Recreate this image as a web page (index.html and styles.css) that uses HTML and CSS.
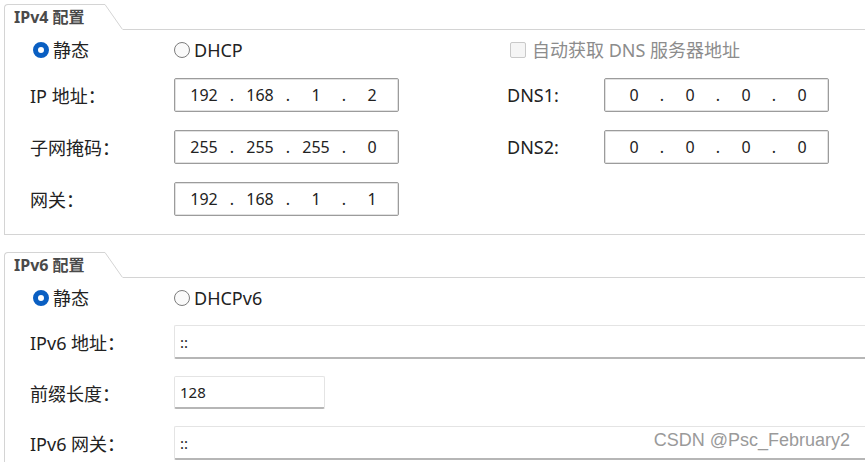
FILE: index.html
```html
<!DOCTYPE html>
<html lang="zh-CN">
<head>
  <meta charset="UTF-8">
  <meta name="viewport" content="width=device-width, initial-scale=1.0">
  <title>IP 配置</title>
  <link rel="stylesheet" href="styles.css">
</head>
<body>
  <div class="page">
    <!-- IPv4 -->
    <section class="group">
      <div class="group-head">
        <div class="tab">IPv4 配置</div>
        <svg class="tab-slant" width="18" height="26" viewBox="0 0 18 26"><path d="M0 0.5 L17.5 25.5" stroke="#d4d4d4" fill="none"/></svg>
        <div class="tab-rest"></div>
      </div>
      <div class="group-body v4">
        <label class="radio"><span class="dot on"></span>静态</label>
        <label class="radio"><span class="dot"></span>DHCP</label>
        <span></span>
        <label class="check"><span class="box"></span>自动获取 DNS 服务器地址</label>

        <span class="label">IP 地址：</span>
        <div class="ip"><span>192</span><i>.</i><span>168</span><i>.</i><span>1</span><i>.</i><span>2</span></div>
        <span></span>
        <span class="label">DNS1:</span>
        <div class="ip"><span>0</span><i>.</i><span>0</span><i>.</i><span>0</span><i>.</i><span>0</span></div>

        <span class="label">子网掩码：</span>
        <div class="ip"><span>255</span><i>.</i><span>255</span><i>.</i><span>255</span><i>.</i><span>0</span></div>
        <span></span>
        <span class="label">DNS2:</span>
        <div class="ip"><span>0</span><i>.</i><span>0</span><i>.</i><span>0</span><i>.</i><span>0</span></div>

        <span class="label">网关：</span>
        <div class="ip"><span>192</span><i>.</i><span>168</span><i>.</i><span>1</span><i>.</i><span>1</span></div>
      </div>
    </section>

    <!-- IPv6 -->
    <section class="group second">
      <div class="group-head">
        <div class="tab">IPv6 配置</div>
        <svg class="tab-slant" width="18" height="26" viewBox="0 0 18 26"><path d="M0 0.5 L17.5 25.5" stroke="#d4d4d4" fill="none"/></svg>
        <div class="tab-rest"></div>
      </div>
      <div class="group-body v6">
        <label class="radio"><span class="dot on"></span>静态</label>
        <label class="radio"><span class="dot"></span>DHCPv6</label>

        <span class="label">IPv6 地址：</span>
        <div class="field wide">::</div>

        <span class="label">前缀长度：</span>
        <div class="field short">128</div>

        <span class="label">IPv6 网关：</span>
        <div class="field wide">::</div>
      </div>
    </section>
  </div>

  <div class="watermark">CSDN @Psc_February2</div>
</body>
</html>
```

FILE: styles.css
```css
* {
  margin: 0;
  padding: 0;
  box-sizing: border-box;
}

body {
  font-family: 'Noto Sans', 'Noto Sans CJK SC', sans-serif;
  color: #222;
  background: #fff;
  height: 462px;
  position: relative;
  overflow: hidden;
}

.page {
  padding: 4px 0 0 4px;
}

/* group box with tab header */
.group-head {
  display: flex;
  height: 26px;
}

.tab {
  width: 101px;
  height: 26px;
  border-top: 1px solid #d4d4d4;
  border-left: 1px solid #d4d4d4;
  border-top-left-radius: 4px;
  padding-left: 9px;
  font-size: 16px;
  font-weight: bold;
  line-height: 24px;
  color: #4a4a4a;
  white-space: nowrap;
}

.tab-slant {
  display: block;
  flex: none;
}

.tab-rest {
  flex: 1;
  border-bottom: 1px solid #d4d4d4;
}

.group-body {
  border-left: 1px solid #d4d4d4;
  border-bottom: 1px solid #d4d4d4;
  display: grid;
  align-items: center;
  padding-left: 25px;
  padding-top: 10px;
}

.group-body.v4 {
  grid-template-columns: 144px 225px 108px 97px 225px;
  grid-template-rows: 20px 34px 34px 34px;
  row-gap: 18px;
  padding-bottom: 18px;
}

.group.second {
  margin-top: 17px;
}

.group-body.v6 {
  grid-template-columns: 144px 1fr;
  grid-template-rows: 20px 34px 33px 34px;
  row-gap: 17px;
  padding-bottom: 10px;
}

.label {
  font-size: 18px;
  color: #222;
  white-space: nowrap;
}

/* radios and checkbox */
.radio, .check {
  display: flex;
  align-items: center;
  gap: 4px;
  font-size: 18px;
  line-height: 20px;
  white-space: nowrap;
}

.radio:first-child {
  margin-left: 3px;
}

.dot {
  width: 16px;
  height: 16px;
  border-radius: 50%;
  border: 1px solid #7c7c7c;
  background: #fafafa;
  flex: none;
}

.dot.on {
  border: 5px solid #0a5fc2;
  background: #fff;
}

.check {
  grid-column: 4 / span 2;
  margin-left: 3px;
  color: #8c8c8c;
  gap: 6px;
}

.box {
  width: 16px;
  height: 16px;
  border: 1px solid #c9c9c9;
  border-radius: 2px;
  background: #f5f5f5;
  flex: none;
}

/* ip address control */
.ip {
  height: 34px;
  border: 1px solid #9c9c9c;
  border-radius: 2px;
  box-shadow: inset 0 0 0 1px #e2e2e2;
  display: flex;
  align-items: center;
  padding-left: 6px;
  font-size: 16px;
  color: #222;
}

.ip span {
  width: 46px;
  text-align: center;
}

.ip i {
  font-style: normal;
  width: 10px;
  text-align: center;
}

/* ipv6 text fields */
.field {
  height: 100%;
  border: 1px solid #e4e4e4;
  border-bottom: 2px solid #b6b6b6;
  border-radius: 2px;
  background: #fff;
  display: flex;
  align-items: center;
  padding-left: 5px;
  font-size: 15px;
  color: #222;
}

.field.short {
  width: 151px;
}

.field.wide {
  border-right: none;
  border-radius: 2px 0 0 2px;
}

.watermark {
  position: absolute;
  right: 15px;
  top: 430px;
  font-family: 'Liberation Sans', Arial, sans-serif;
  font-size: 18px;
  color: #9a9a9a;
}
```
